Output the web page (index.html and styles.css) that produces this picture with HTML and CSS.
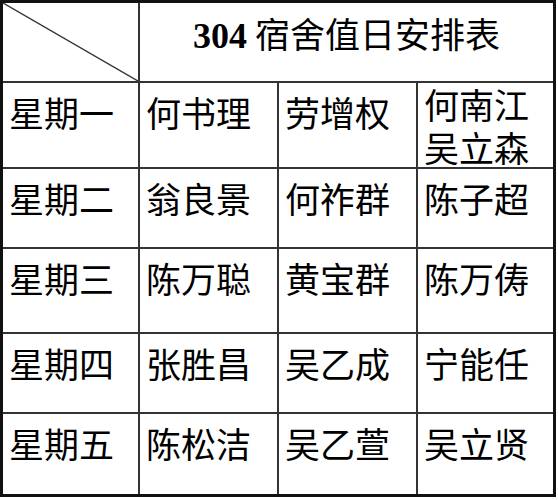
FILE: index.html
```html
<!DOCTYPE html>
<html lang="zh">
<head>
<meta charset="utf-8">
<title>304 宿舍值日安排表</title>
<link rel="stylesheet" href="styles.css">
</head>
<body>
<div class="sheet">
  <div class="cell corner">
    <svg class="diag" viewBox="0 0 100 100" preserveAspectRatio="none"><line x1="0" y1="0" x2="100" y2="100" stroke="#333" stroke-width="1.4" vector-effect="non-scaling-stroke"/></svg>
  </div>
  <div class="cell title"><span class="num">304</span> 宿舍值日安排表</div>

  <div class="cell">星期一</div>
  <div class="cell">何书理</div>
  <div class="cell">劳增权</div>
  <div class="cell multi last"><div class="line">何南江</div><div class="line">吴立森</div></div>

  <div class="cell">星期二</div>
  <div class="cell">翁良景</div>
  <div class="cell">何祚群</div>
  <div class="cell last">陈子超</div>

  <div class="cell">星期三</div>
  <div class="cell">陈万聪</div>
  <div class="cell">黄宝群</div>
  <div class="cell last">陈万俦</div>

  <div class="cell">星期四</div>
  <div class="cell">张胜昌</div>
  <div class="cell">吴乙成</div>
  <div class="cell last">宁能任</div>

  <div class="cell bottom">星期五</div>
  <div class="cell bottom">陈松洁</div>
  <div class="cell bottom">吴乙萱</div>
  <div class="cell bottom last">吴立贤</div>
</div>
</body>
</html>
```
FILE: styles.css
```css
html, body {
  margin: 0;
  padding: 0;
  background: #fff;
}
.sheet {
  width: 550px;
  border: 3px solid #111;
  display: grid;
  grid-template-columns: 137px 139px 139px 135px;
  grid-template-rows: 80px 86px 80px 85px 80px 80px;
  font-family: "Noto Sans CJK SC", "Noto Sans", sans-serif;
  font-size: 35px;
  line-height: 44px;
  color: #000;
}
.cell {
  border-right: 2px solid #333;
  border-bottom: 2px solid #333;
  padding: 7px 0 0 6px;
  white-space: nowrap;
}
.cell.last {
  border-right: none;
}
.cell.bottom {
  border-bottom: none;
}
.cell.multi {
  padding-top: 0;
  display: flex;
  flex-direction: column;
  gap: 1px;
}
.line {
  height: 42px;
  line-height: 42px;
}
.corner {
  padding: 0;
}
.diag {
  display: block;
  width: 100%;
  height: 100%;
}
.title {
  grid-column: span 3;
  border-right: none;
  text-align: center;
  font-size: 35px;
  padding: 8px 0 0 0;
}
.num {
  font-family: "Liberation Serif", serif;
  font-weight: bold;
  font-size: 36px;
}
```
